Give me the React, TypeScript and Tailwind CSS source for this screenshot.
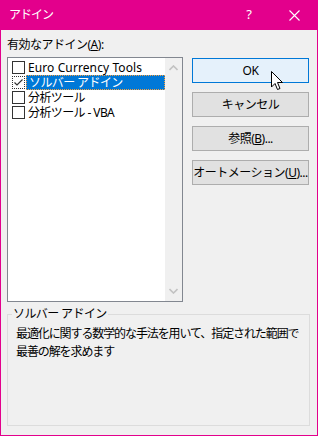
import React from "react";

const FONT = { fontFamily: '"Noto Sans", "Noto Sans CJK JP", sans-serif' };

const items = [
  { label: "Euro Currency Tools", jp: false },
  { label: "ソルバー アドイン", jp: true },
  { label: "分析ツール", jp: true },
  { label: "分析ツール - VBA", jp: true },
];

function Check() {
  return (
    <svg width="11" height="11" viewBox="0 0 11 11" className="block">
      <path d="M1.5 5.5 L4 8 L9.5 2.5" fill="none" stroke="#333" strokeWidth="1.2" />
    </svg>
  );
}

function Row({ label, jp, selected }: { label: string; jp: boolean; selected: boolean }) {
  return (
    <div className="flex items-center h-[15px] leading-[13px]">
      <span
        className={`ml-[4px] w-[13px] h-[13px] shrink-0 flex items-center justify-center bg-white border ${selected ? "border-dotted border-[#333]" : "border-[#333]"}`}
      >
        {selected && <Check />}
      </span>
      <span
        className={`ml-[1px] h-[15px] flex items-center pl-[2px] whitespace-nowrap ${jp ? "tracking-[-0.6px]" : "tracking-[0.1px]"} ${selected ? "w-[139px] bg-[#0078d7] text-white border border-dotted border-[#f5a040]" : "text-black"}`}
      >
        {label}
      </span>
    </div>
  );
}

function Btn({ children, primary = false }: { children: React.ReactNode; primary?: boolean }) {
  return (
    <div
      className={`h-[25px] w-[117px] flex items-center justify-center text-[12px] leading-[15px] text-black border whitespace-nowrap ${primary ? "bg-[#e5f1fb] border-[#0078d7]" : "bg-[#e1e1e1] border-[#adadad]"}`}
    >
      {children}
    </div>
  );
}

export default function App() {
  return (
    <div className="w-[318px] h-[436px] bg-[#e3008c] flex flex-col px-[1px] pb-[1px] relative" style={FONT}>
      {/* タイトルバー */}
      <div className="h-[30px] flex items-center text-white text-[12px]">
        <span className="ml-[8px] flex-1 tracking-[-1px]">アドイン</span>
        <span className="w-[46px] text-center text-[13px] pl-[2px]">?</span>
        <span className="w-[46px] flex justify-center">
          <svg width="11" height="11" viewBox="0 0 11 11">
            <path d="M0.5 0.5 L10.5 10.5 M10.5 0.5 L0.5 10.5" stroke="#fff" strokeWidth="1.1" />
          </svg>
        </span>
      </div>

      <div className="flex-1 bg-[#f0f0f0] px-[6px] flex flex-col">
        <div className="flex gap-[9px]">
          <div className="w-[176px] flex flex-col">
            <div className="h-[27px] pt-[7px] text-[12px] leading-[15px] tracking-[-0.5px] text-black">
              有効なアドイン(<span className="underline">A</span>):
            </div>
            <div className="h-[245px] border border-[#828790] bg-white flex">
              <div className="flex-1 pt-[2px] text-[12px]">
                {items.map((it, i) => (
                  <Row key={it.label} label={it.label} jp={it.jp} selected={i === 1} />
                ))}
              </div>
              <div className="w-[17px] bg-[#f0f0f0] flex flex-col items-center justify-between py-[7px]">
                <svg width="9" height="6" viewBox="0 0 9 6">
                  <path d="M0.5 5 L4.5 1 L8.5 5" fill="none" stroke="#c2c2c2" strokeWidth="1.6" />
                </svg>
                <svg width="9" height="6" viewBox="0 0 9 6">
                  <path d="M0.5 1 L4.5 5 L8.5 1" fill="none" stroke="#c2c2c2" strokeWidth="1.6" />
                </svg>
              </div>
            </div>
          </div>
          <div className="flex flex-col gap-[9px] pt-[28px] tracking-[-0.5px]">
            <Btn primary>OK</Btn>
            <Btn>キャンセル</Btn>
            <Btn>
              参照(<span className="underline">B</span>)...
            </Btn>
            <Btn>
              オートメーション(<span className="underline">U</span>)...
            </Btn>
          </div>
        </div>

        {/* 説明グループ */}
        <div className="mt-[12px] w-[303px] h-[112px] border border-[#dcdcdc] relative px-[8px] pt-[10px] text-[12px] leading-[18px] text-black tracking-[-1.1px] whitespace-nowrap">
          <span className="absolute left-[4px] top-[-9px] bg-[#f0f0f0] px-[1px] leading-[16px] tracking-[-0.6px]">ソルバー アドイン</span>
          <p>最適化に関する数学的な手法を用いて、指定された範囲で</p>
          <p>最善の解を求めます</p>
        </div>
      </div>

      {/* マウスカーソル */}
      <svg className="absolute left-[271px] top-[71px]" width="13" height="20" viewBox="0 0 13 20">
        <path d="M0.5 0.5 L0.5 16 L4 12.5 L6.5 18.5 L9 17.5 L6.5 11.5 L11.5 11.5 Z" fill="#fff" stroke="#000" strokeWidth="1" strokeLinejoin="miter" />
      </svg>
    </div>
  );
}
